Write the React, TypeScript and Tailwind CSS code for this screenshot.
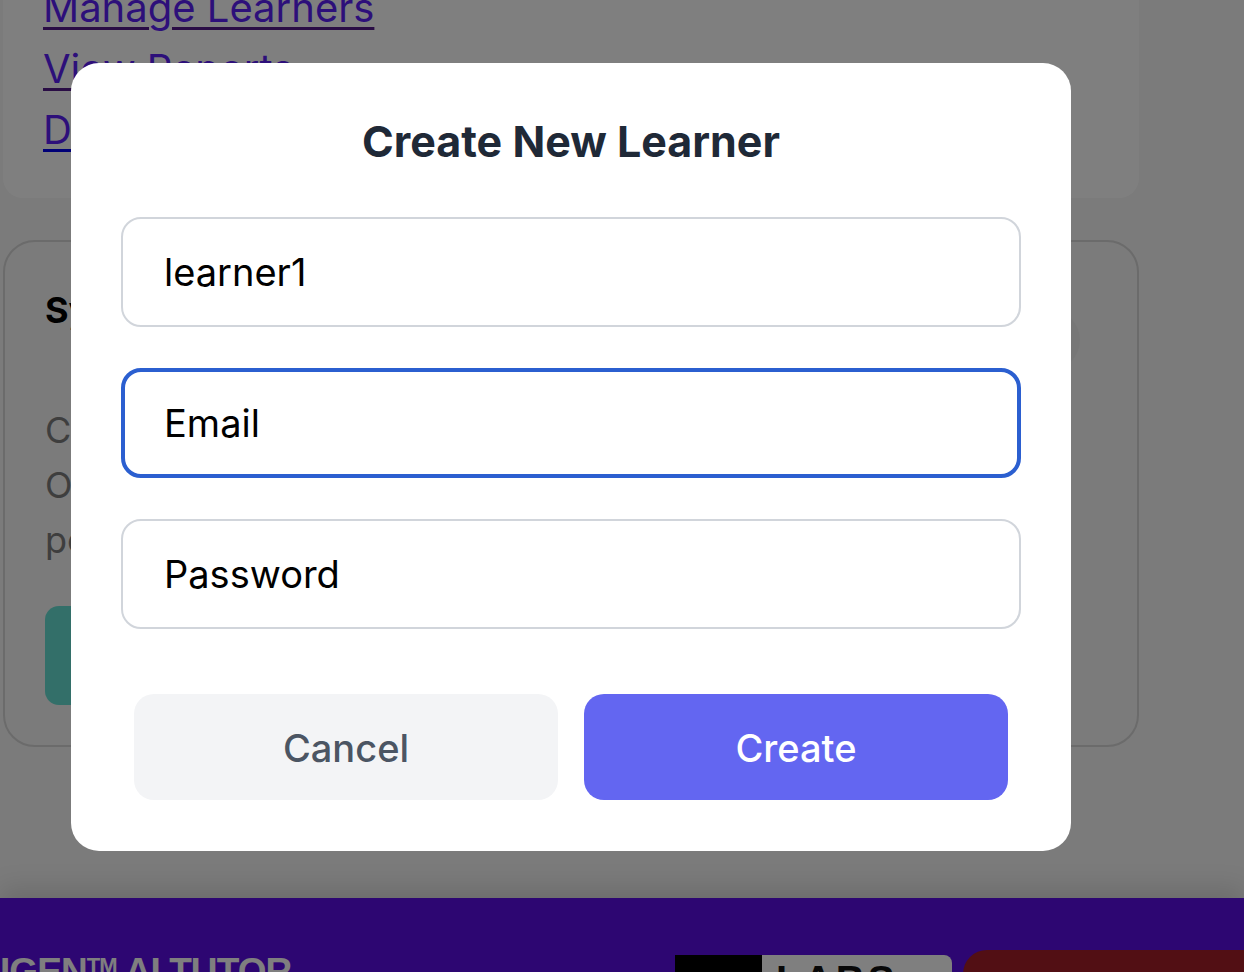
import React from 'react';

const App: React.FC = () => {
  return (
    <div className="relative min-h-screen overflow-hidden bg-[#f6f6f6] font-['Inter',sans-serif]">
      <main className="ml-[3px] -mt-[63px] w-[1136px]">
        <section className="rounded-[20px] bg-white px-10 pt-10 pb-[38px]">
          <nav className="flex flex-col items-start text-[40px] leading-[61px] text-[#5b1ff5]">
            <a href="#" className="underline decoration-[#551a8b] decoration-[3px] underline-offset-[5px]">Manage Learners</a>
            <a href="#" className="underline decoration-[#551a8b] decoration-[3px] underline-offset-[5px]">View Reports</a>
            <a href="#" className="underline decoration-[#0000ee] decoration-[3px] underline-offset-[5px]">Download Data</a>
          </nav>
        </section>

        <section className="mt-[42px] rounded-[32px] border-2 border-[#d6d6d6] px-10 pt-[41px] pb-10">
          <div className="mb-[33px] flex items-start justify-between">
            <h2 className="text-[36px] font-bold leading-[54px] text-black">System Overview</h2>
            <div className="mt-[27px] mr-[17px] h-[60px] w-[60px] rounded-full bg-[#efefef]" />
          </div>
          <p className="text-[36px] leading-[55px] text-[#7d7d7d]">
            Create learner accounts and assign them to a tutor.
            <br />
            Organize learners by class and monitor their
            <br />
            performance across all active sessions.
          </p>
          <button className="mt-[38px] h-[99px] w-[320px] rounded-[14px] bg-[#66dfd3] text-[36px] font-semibold text-white">
            Add Learner
          </button>
        </section>
      </main>

      <footer className="mt-[151px] flex items-start bg-[#5a0ce4] pt-[52px] shadow-[0_-10px_25px_rgba(0,0,0,0.12)]">
        <div className="w-[675px] shrink-0 pt-[3px] font-['Liberation_Sans',sans-serif] text-[37px] font-bold leading-none tracking-tight text-white">
          IGEN<sup className="text-[22px]">TM</sup> AI TUTOR
        </div>
        <div className="mt-[5px] flex">
          <div className="h-[80px] w-[87px] bg-black" />
          <div className="h-[80px] w-[190px] rounded-tr-[8px] bg-white pt-[5px] pl-[14px] font-['Liberation_Sans',sans-serif] text-[40px] font-bold leading-none tracking-[0.08em] text-[#111]">
            LABS
          </div>
        </div>
        <div className="ml-[11px] h-[90px] flex-1 rounded-tl-[24px] bg-[#a41e28]" />
      </footer>

      {/* modal */}
      <div className="fixed inset-0 bg-black/50 pl-[71px] pt-[63px]">
        <div className="w-[1000px] rounded-[28px] bg-white px-[50px] pt-[50px] pb-[51px]">
          <h2 className="mb-[48px] text-center text-[43px] font-bold leading-[56px] text-[#1f2937]">Create New Learner</h2>
          <input
            type="text"
            defaultValue="learner1"
            className="mb-[41px] block h-[110px] w-full rounded-[20px] border-2 border-[#d1d5db] px-[41px] text-[38px] text-black outline-none"
          />
          <input
            type="email"
            placeholder="Email"
            className="mb-[41px] block h-[110px] w-full rounded-[20px] border-[4px] border-[#2b5fd0] px-[39px] text-[38px] text-black outline-none placeholder:text-black"
          />
          <input
            type="password"
            placeholder="Password"
            className="block h-[110px] w-full rounded-[20px] border-2 border-[#d1d5db] px-[41px] text-[38px] text-black outline-none placeholder:text-black"
          />
          <div className="mt-[65px] flex">
            <button className="mx-[13px] h-[106px] flex-1 rounded-[20px] bg-[#f3f4f6] pt-[3px] text-[38px] font-medium text-[#4b5563]">
              Cancel
            </button>
            <button className="mx-[13px] h-[106px] flex-1 rounded-[20px] bg-[#6366f1] pt-[3px] text-[38px] font-medium text-white">
              Create
            </button>
          </div>
        </div>
      </div>
    </div>
  );
};

export default App;
